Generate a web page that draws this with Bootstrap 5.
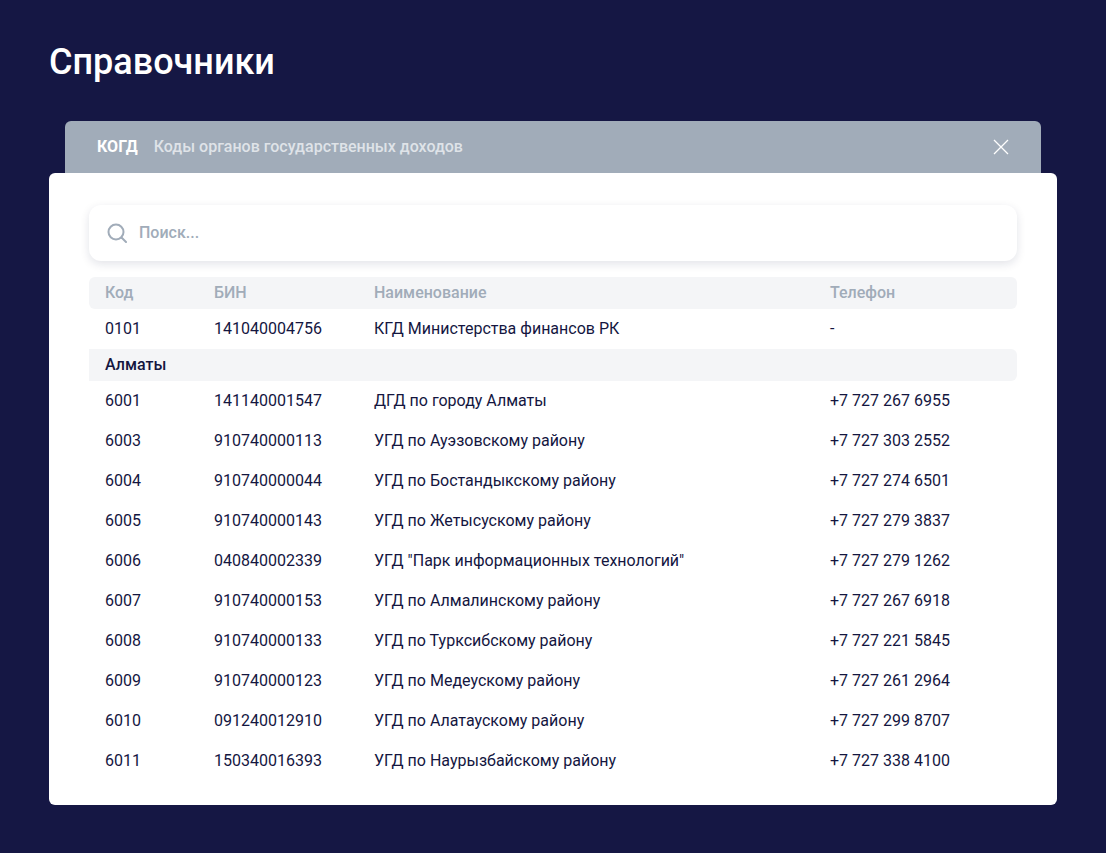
<!DOCTYPE html>
<html lang="ru">
<head>
  <meta charset="UTF-8">
  <title>Справочники</title>
  <link href="https://cdn.jsdelivr.net/npm/bootstrap@5.3.0/dist/css/bootstrap.min.css" rel="stylesheet" />
  <style>
    body {
      margin: 0;
      height: 853px;
      overflow: hidden;
      background-color: #151744;
      font-family: Roboto, "Liberation Sans", sans-serif;
      color: #14163f;
    }

    .page-head {
      padding: 40px 49px 0;
      height: 121px;
    }

    .page-head h1 {
      margin: 0;
      color: #fff;
      font-size: 36px;
      line-height: 44px;
      font-weight: 500;
    }

    .dict-head {
      margin: 0 65px;
      height: 52px;
      padding: 0 32px;
      background-color: #a1acb9;
      border-radius: 6px 6px 0 0;
    }

    .dict-code {
      color: #fff;
      font-size: 16px;
      font-weight: 700;
      margin-right: 16px;
    }

    .dict-name {
      color: #dfe3e8;
      font-size: 16px;
      font-weight: 500;
    }

    .dict-close {
      background: none;
      border: 0;
      padding: 0;
      width: 16px;
      height: 16px;
      line-height: 0;
    }

    .dict-panel {
      margin: 0 49px;
      height: 632px;
      padding: 32px 40px;
      background-color: #fff;
      border-radius: 6px;
    }

    .search-box {
      height: 56px;
      padding: 0 18px;
      gap: 10px;
      border-radius: 12px;
      box-shadow: 0 3px 10px rgba(20, 22, 63, 0.12);
      margin-bottom: 16px;
    }

    .search-box input {
      border: 0;
      outline: 0;
      flex-grow: 1;
      font-size: 16px;
      font-weight: 500;
      color: #14163f;
    }

    .search-box input::placeholder {
      color: #a1acb9;
      opacity: 1;
    }

    .dict-scroll {
      height: 496px;
      overflow-y: scroll;
    }

    .dict-scroll::-webkit-scrollbar {
      width: 17px;
    }

    .dict-scroll::-webkit-scrollbar-track {
      background-color: #f1f1f1;
    }

    .dict-scroll::-webkit-scrollbar-thumb {
      background-color: #c1c1c1;
      border: 2px solid #f1f1f1;
      border-width: 0 2px;
    }

    .dict-scroll::-webkit-scrollbar-button:single-button {
      display: block;
      height: 17px;
      background-color: #f1f1f1;
      background-repeat: no-repeat;
      background-position: center;
    }

    .dict-scroll::-webkit-scrollbar-button:single-button:vertical:decrement {
      background-image: url("data:image/svg+xml,%3Csvg xmlns='http://www.w3.org/2000/svg' width='9' height='5'%3E%3Cpath d='M.5 5 4.5.5 8.5 5z' fill='%23a3a3a3'/%3E%3C/svg%3E");
    }

    .dict-scroll::-webkit-scrollbar-button:single-button:vertical:increment {
      background-image: url("data:image/svg+xml,%3Csvg xmlns='http://www.w3.org/2000/svg' width='9' height='5'%3E%3Cpath d='M.5 0 4.5 4.5 8.5 0z' fill='%23505050'/%3E%3C/svg%3E");
    }

    .dict-table {
      width: 100%;
      table-layout: fixed;
      border-collapse: separate;
      border-spacing: 0;
      margin-bottom: 972px;
      font-size: 16px;
    }

    .dict-table td,
    .dict-table th {
      padding: 0 0 0 16px;
      height: 40px;
      font-weight: 400;
      white-space: nowrap;
    }

    .dict-table td:nth-child(n+2),
    .dict-table th:nth-child(n+2) {
      padding-left: 0;
    }

    .dict-table thead th {
      height: 32px;
      color: #a1acb9;
      font-weight: 500;
      background-color: #f4f5f7;
    }

    .dict-table .dict-group td {
      height: 32px;
      font-weight: 500;
      background-color: #f4f5f7;
    }

    .dict-table tr > :first-child {
      border-radius: 6px 0 0 6px;
    }

    .dict-table tr > :last-child {
      border-radius: 0 6px 6px 0;
    }
  </style>
</head>
<body>
  <div class="page-head">
    <h1>Справочники</h1>
  </div>

  <div class="dict-head d-flex align-items-center">
    <span class="dict-code">КОГД</span>
    <span class="dict-name">Коды органов государственных доходов</span>
    <button class="dict-close ms-auto" type="button" aria-label="Закрыть">
      <svg width="16" height="16" viewBox="0 0 16 16" fill="none" stroke="#fff" stroke-width="1.3"><path d="M1 1l14 14M15 1L1 15"/></svg>
    </button>
  </div>

  <div class="dict-panel">
    <div class="search-box d-flex align-items-center">
      <svg width="20" height="20" viewBox="0 0 20 20" fill="none" stroke="#a1acb9" stroke-width="2"><circle cx="9" cy="9" r="7.5"/><path d="M14.5 14.5L19 19" stroke-linecap="round"/></svg>
      <input type="text" placeholder="Поиск...">
    </div>

    <div class="dict-scroll">
      <table class="dict-table">
        <colgroup>
          <col style="width: 125px">
          <col style="width: 160px">
          <col style="width: 456px">
          <col>
        </colgroup>
        <thead>
          <tr><th>Код</th><th>БИН</th><th>Наименование</th><th>Телефон</th></tr>
        </thead>
        <tbody>
          <tr><td>0101</td><td>141040004756</td><td>КГД Министерства финансов РК</td><td>-</td></tr>
          <tr class="dict-group"><td colspan="4">Алматы</td></tr>
          <tr><td>6001</td><td>141140001547</td><td>ДГД по городу Алматы</td><td>+7 727 267 6955</td></tr>
          <tr><td>6003</td><td>910740000113</td><td>УГД по Ауэзовскому району</td><td>+7 727 303 2552</td></tr>
          <tr><td>6004</td><td>910740000044</td><td>УГД по Бостандыкскому району</td><td>+7 727 274 6501</td></tr>
          <tr><td>6005</td><td>910740000143</td><td>УГД по Жетысускому району</td><td>+7 727 279 3837</td></tr>
          <tr><td>6006</td><td>040840002339</td><td>УГД "Парк информационных технологий"</td><td>+7 727 279 1262</td></tr>
          <tr><td>6007</td><td>910740000153</td><td>УГД по Алмалинскому району</td><td>+7 727 267 6918</td></tr>
          <tr><td>6008</td><td>910740000133</td><td>УГД по Турксибскому району</td><td>+7 727 221 5845</td></tr>
          <tr><td>6009</td><td>910740000123</td><td>УГД по Медеускому району</td><td>+7 727 261 2964</td></tr>
          <tr><td>6010</td><td>091240012910</td><td>УГД по Алатаускому району</td><td>+7 727 299 8707</td></tr>
          <tr><td>6011</td><td>150340016393</td><td>УГД по Наурызбайскому району</td><td>+7 727 338 4100</td></tr>
        </tbody>
      </table>
    </div>
  </div>

  <script src="https://cdn.jsdelivr.net/npm/bootstrap@5.3.0/dist/js/bootstrap.bundle.min.js"></script>
</body>
</html>
